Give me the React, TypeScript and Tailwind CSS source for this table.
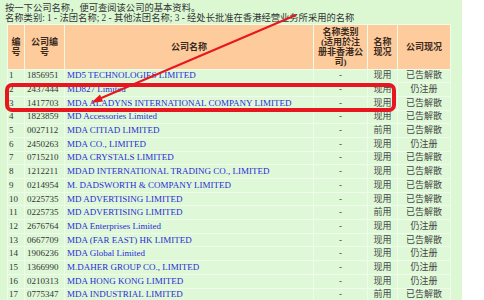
const rows: [string, string, string, string, string][] = [
  ['1', '1856951', 'MD5 TECHNOLOGIES LIMITED', '现用', '已告解散'],
  ['2', '2437444', 'MD827 Limited', '现用', '仍注册'],
  ['3', '1417703', 'MDA ALADYNS INTERNATIONAL COMPANY LIMITED', '现用', '已告解散'],
  ['4', '1823859', 'MD Accessories Limited', '现用', '已告解散'],
  ['5', '0027112', 'MDA CITIAD LIMITED', '前用', '已告解散'],
  ['6', '2450263', 'MDA CO., LIMITED', '现用', '仍注册'],
  ['7', '0715210', 'MDA CRYSTALS LIMITED', '现用', '已告解散'],
  ['8', '1212211', 'MDAD INTERNATIONAL TRADING CO., LIMITED', '现用', '已告解散'],
  ['9', '0214954', 'M. DADSWORTH & COMPANY LIMITED', '现用', '已告解散'],
  ['10', '0225735', 'MD ADVERTISING LIMITED', '现用', '已告解散'],
  ['11', '0225735', 'MD ADVERTISING LIMITED', '前用', '已告解散'],
  ['12', '2676764', 'MDA Enterprises Limited', '现用', '仍注册'],
  ['13', '0667709', 'MDA (FAR EAST) HK LIMITED', '现用', '已告解散'],
  ['14', '1906236', 'MDA Global Limited', '现用', '仍注册'],
  ['15', '1366990', 'M.DAHER GROUP CO., LIMITED', '现用', '仍注册'],
  ['16', '0210313', 'MDA HONG KONG LIMITED', '现用', '仍注册'],
  ['17', '0775347', 'MDA INDUSTRIAL LIMITED', '前用', '已告解散'],
];

const font = "font-['Liberation_Serif','Noto_Sans_CJK_SC',serif]";

function App() {
  return (
    <div className="relative h-[300px] w-[484px] overflow-hidden bg-white">
      <div className={`h-full w-[462px] bg-[#dbf8d3] pt-[3px] text-[9px] text-[#333] ${font}`}>
        <div className="pl-[5px] leading-[10px] text-[9.3px]">
          <p>按一下公司名称，便可查阅该公司的基本资料。</p>
          <p>名称类别: 1 - 法团名称; 2 - 其他法团名称; 3 - 经处长批准在香港经营业务所采用的名称</p>
        </div>

        {/* 结果表格 */}
        <table className="ml-[7px] mt-[1px] table-fixed border-separate border-spacing-[1px] bg-[#effcea]">
          <colgroup>
            <col className="w-[16px]" />
            <col className="w-[39px]" />
            <col className="w-[248px]" />
            <col className="w-[53px]" />
            <col className="w-[29px]" />
            <col className="w-[52px]" />
          </colgroup>
          <thead>
            <tr className="h-[43.5px] bg-[#fdcb9c] text-center font-bold leading-[10px] text-[#3b2a1c]">
              <th className="p-0">编<br />号</th>
              <th className="p-0">公司编<br />号</th>
              <th className="p-0">公司名称</th>
              <th className="p-0">名称类别<br />(适用於注<br />册非香港公<br />司)</th>
              <th className="p-0">名称<br />现况</th>
              <th className="p-0">公司现况</th>
            </tr>
          </thead>
          <tbody>
            {rows.map(([no, code, name, nameStatus, status]) => (
              <tr key={no} className="h-[12.7px] bg-[#dff9d8] leading-[11px]">
                <td className="p-0 pl-[1px]">{no}</td>
                <td className="p-0 pl-[2px]">{code}</td>
                <td className="whitespace-nowrap p-0 pl-[2px] text-[#2a2ad8]">{name}</td>
                <td className="p-0 text-center">-</td>
                <td className="p-0 text-center text-[#444]">{nameStatus}</td>
                <td className="p-0 text-center text-[#444]">{status}</td>
              </tr>
            ))}
          </tbody>
        </table>
      </div>

      {/* 红色标注 */}
      <svg className="pointer-events-none absolute inset-0" width="484" height="300" viewBox="0 0 484 300">
        <rect x="7" y="85" width="387" height="25" rx="5" fill="none" stroke="#e8161f" strokeWidth="4" />
        <line x1="296" y1="15" x2="99" y2="99" stroke="#e8161f" strokeWidth="2" />
        <polygon points="91,103 100,94.5 103,101.5" fill="#e8161f" />
      </svg>
    </div>
  );
}

export default App;
